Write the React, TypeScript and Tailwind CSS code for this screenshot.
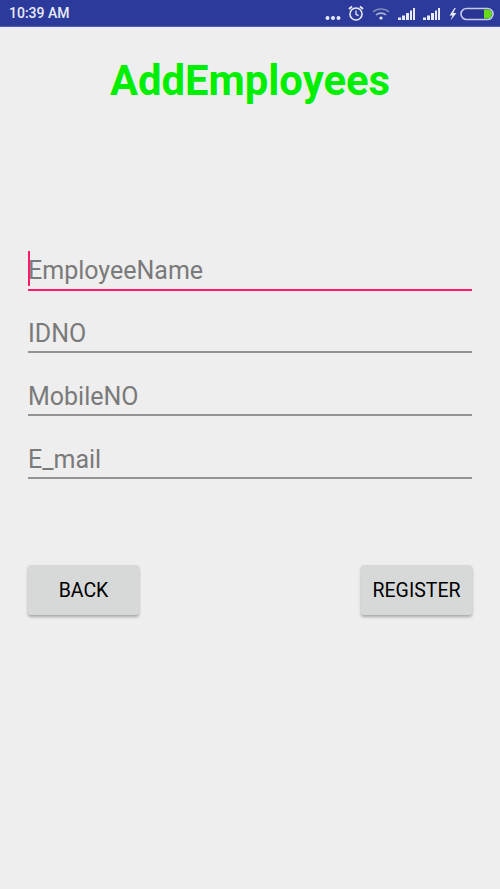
import React from "react";

function Field({ label, active }: { label: string; active?: boolean }) {
  return (
    <div className={active ? "relative -mb-px h-[40px] border-b-2 border-[#ff1a6e]" : "h-[40px] border-b-2 border-[#939393]"}>
      {active ? <div className="absolute left-0 top-[0px] h-[35px] w-[2px] bg-[#ff1a6e]" /> : null}
      <div className={active ? "pt-[3px] text-[25px] leading-[34px] text-[#7a7a7a]" : "pt-[4px] text-[25px] leading-[34px] text-[#7a7a7a]"}>{label}</div>
    </div>
  );
}

function StatusIcons() {
  return (
    <svg width="180" height="26" viewBox="320 0 180 26" className="block">
      <circle cx="327.5" cy="18" r="2" fill="#e8eaf6" />
      <circle cx="333" cy="18" r="2" fill="#e8eaf6" />
      <circle cx="338.5" cy="18" r="2" fill="#e8eaf6" />
      <circle cx="356" cy="14" r="6" fill="none" stroke="#e8eaf6" strokeWidth="1.6" />
      <path d="M356 10.5V14.3L358.6 15.6" fill="none" stroke="#e8eaf6" strokeWidth="1.3" />
      <path d="M349 9L352 6.5M363 9L360 6.5" stroke="#e8eaf6" strokeWidth="2" />
      <path d="M373 12C377 8 385 8 389 12" fill="none" stroke="#7f88b8" strokeWidth="1.6" />
      <path d="M376 15C378.5 12.5 383.5 12.5 386 15" fill="none" stroke="#aab0d2" strokeWidth="1.6" />
      <circle cx="381" cy="18" r="1.6" fill="#e8eaf6" />
      <path d="M398 20V17.5H401V20ZM402 20V15.5H405V20ZM406 20V13H409V20ZM410 20V10.5H412V20ZM413 20V8H415V20Z" fill="#e8eaf6" />
      <path d="M423 20V17.5H426V20ZM427 20V15.5H430V20ZM431 20V13H434V20ZM435 20V10.5H437V20ZM438 20V8H440V20Z" fill="#e8eaf6" />
      <path d="M454.5 8L449.5 15.5H452.5L450.5 20.5L456.5 13H453.2L455.8 8Z" fill="#e8eaf6" />
      <rect x="461" y="8.5" width="32" height="11" rx="5.5" fill="#283593" stroke="#c5cae9" strokeWidth="1.6" />
      <path d="M484 9.5H487.5A4.5 4.5 0 0 1 487.5 18.5H484Z" fill="#64dd17" />
    </svg>
  );
}

function Btn({ children, className }: { children: React.ReactNode; className: string }) {
  return (
    <button className={`flex h-[50px] items-center justify-center rounded-[3px] bg-[#d7d8d8] pt-[2px] text-[19.5px] text-black shadow-[0_2px_3px_rgba(0,0,0,0.3)] ${className}`}>
      {children}
    </button>
  );
}

export default function App() {
  return (
    <div className="flex h-[889px] w-[500px] flex-col bg-[#eeeeee] font-['Roboto',sans-serif]">
      <div className="flex h-[27px] items-center justify-between border-b border-[#4a5fc4] bg-[#2b3a9b] pl-[9px]">
        <span className="text-[14px] font-medium text-[#e8eaf6]">10:39 AM</span>
        <StatusIcons />
      </div>
      <h1 className="mt-[27px] text-center text-[41.8px] font-bold leading-[54px] text-[#00ee00]">AddEmployees</h1>
      <div className="mt-[143px] flex flex-col gap-[23px] px-[28px]">
        <Field label="EmployeeName" active />
        <Field label="IDNO" />
        <Field label="MobileNO" />
        <Field label="E_mail" />
      </div>
      <div className="mt-[86px] flex justify-between px-[28px]">
        <Btn className="w-[111px]">BACK</Btn>
        <Btn className="w-[111px]">REGISTER</Btn>
      </div>
    </div>
  );
}
